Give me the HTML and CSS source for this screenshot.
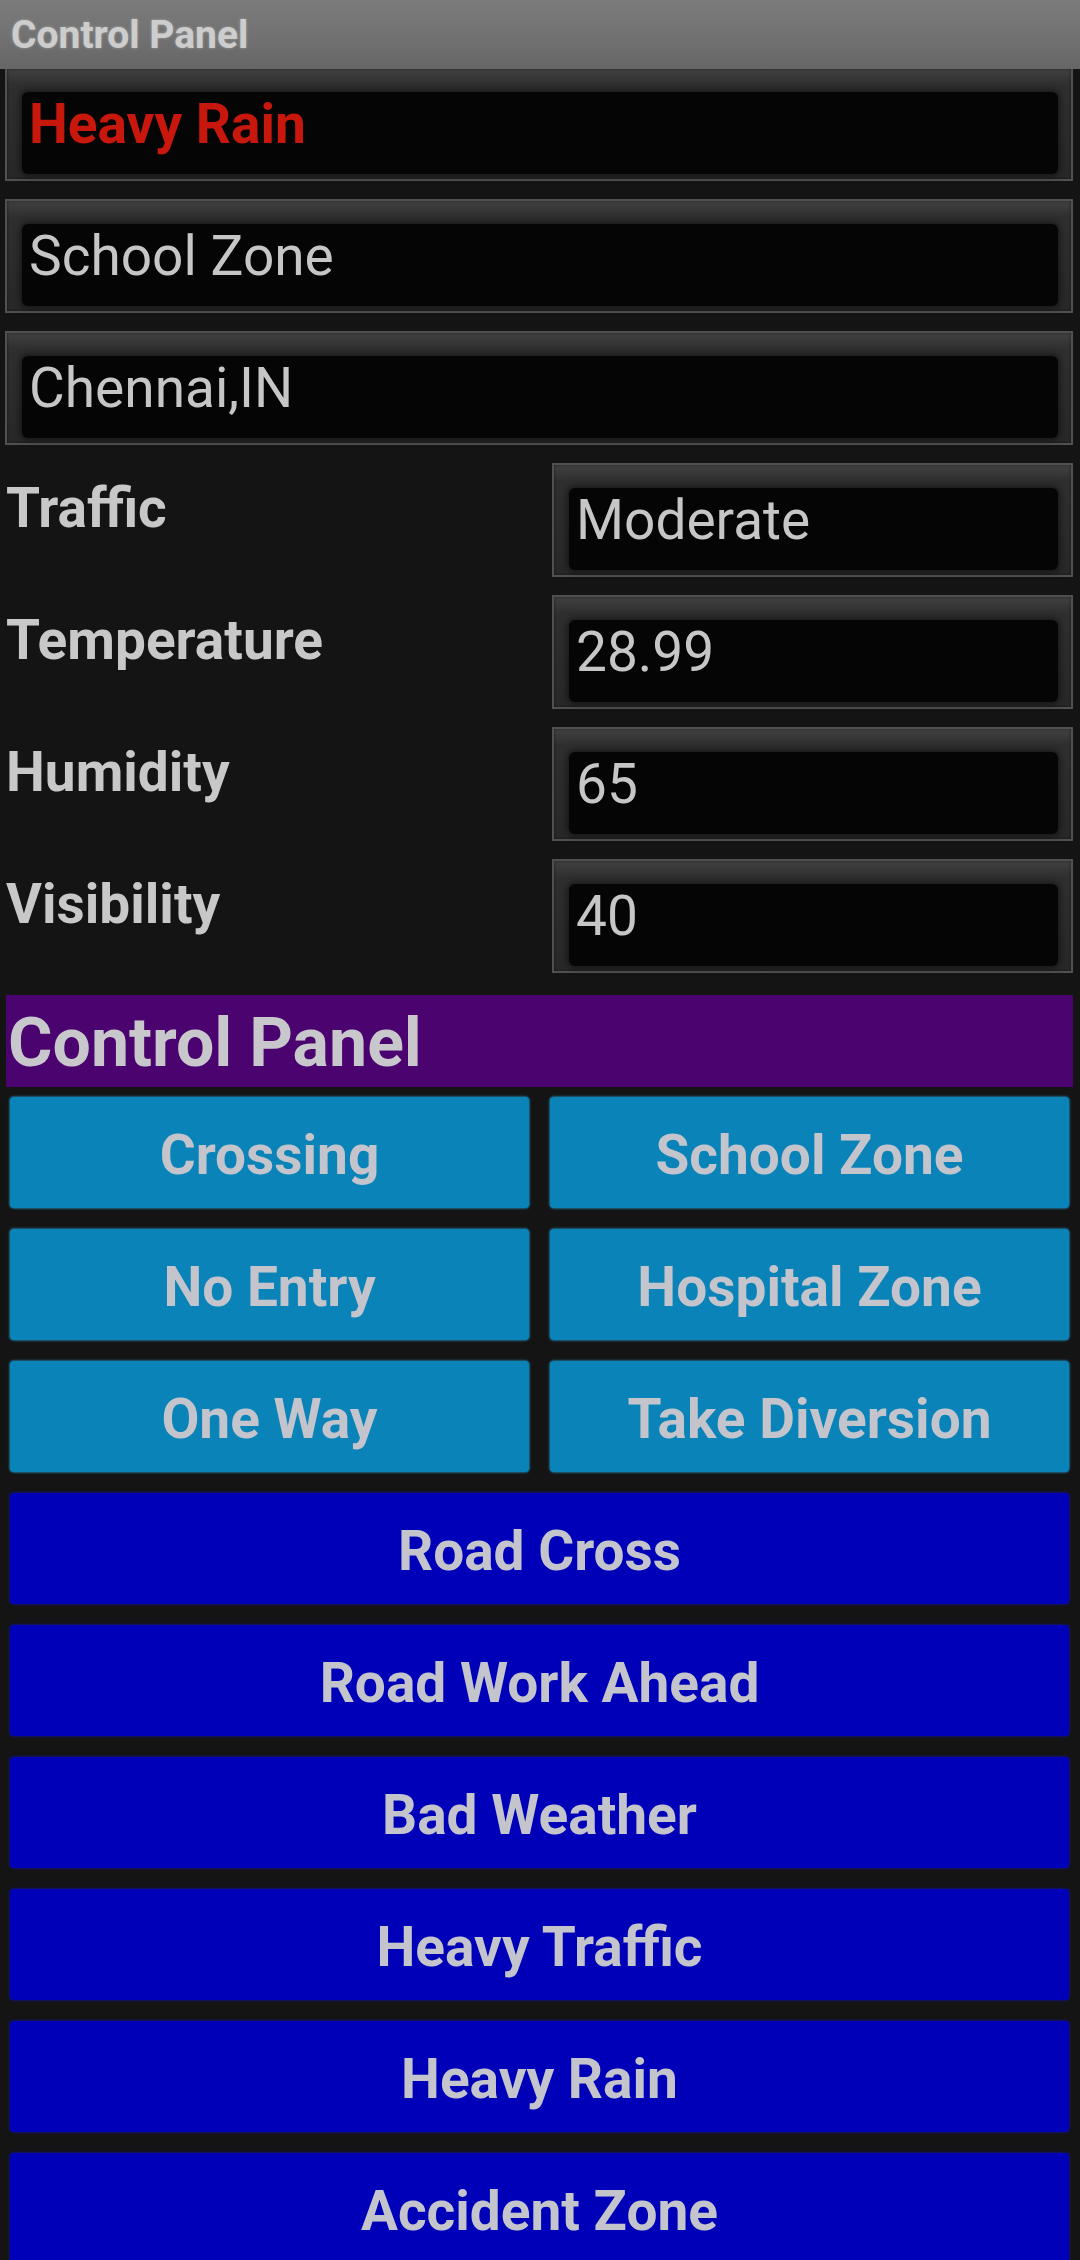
FILE: index.html
```html
<!DOCTYPE html>
<html lang="en">
<head>
<meta charset="utf-8">
<title>Control Panel</title>
<link rel="stylesheet" href="styles.css">
</head>
<body>
<div class="titlebar">Control Panel</div>
<main class="content">
  <div class="field first"><div class="field-inner alert">Heavy Rain</div></div>
  <div class="field"><div class="field-inner">School Zone</div></div>
  <div class="field"><div class="field-inner">Chennai,IN</div></div>

  <div class="info-row">
    <div class="label">Traffic</div>
    <div class="field"><div class="field-inner">Moderate</div></div>
  </div>
  <div class="info-row">
    <div class="label">Temperature</div>
    <div class="field"><div class="field-inner">28.99</div></div>
  </div>
  <div class="info-row">
    <div class="label">Humidity</div>
    <div class="field"><div class="field-inner">65</div></div>
  </div>
  <div class="info-row">
    <div class="label">Visibility</div>
    <div class="field"><div class="field-inner">40</div></div>
  </div>

  <h1 class="panel-header">Control Panel</h1>

  <div class="btn-grid">
    <button class="btn btn-cyan">Crossing</button>
    <button class="btn btn-cyan">School Zone</button>
    <button class="btn btn-cyan">No Entry</button>
    <button class="btn btn-cyan">Hospital Zone</button>
    <button class="btn btn-cyan">One Way</button>
    <button class="btn btn-cyan">Take Diversion</button>
  </div>

  <div class="btn-list">
    <button class="btn btn-blue">Road Cross</button>
    <button class="btn btn-blue">Road Work Ahead</button>
    <button class="btn btn-blue">Bad Weather</button>
    <button class="btn btn-blue">Heavy Traffic</button>
    <button class="btn btn-blue">Heavy Rain</button>
    <button class="btn btn-blue">Accident Zone</button>
  </div>
</main>
</body>
</html>
```

FILE: styles.css
```css
* { box-sizing: border-box; }

html, body {
  margin: 0;
  padding: 0;
  background: #141414;
  font-family: Roboto, "Noto Sans", "Liberation Sans", sans-serif;
  color: #c8c8c8;
}

body { overflow: hidden; }

.titlebar {
  position: relative;
  z-index: 2;
  height: 69px;
  padding: 12px 0 0 11px;
  background: linear-gradient(to bottom, #7b7b7b 0%, #727272 50%, #666666 100%);
  font-weight: 700;
  font-size: 39px;
  line-height: 46px;
  color: #cdcdcd;
  text-shadow: 0 0 3px rgba(255, 255, 255, 0.35);
}

.content {
  padding: 0 7px 0 5px;
}

.field {
  height: 114px;
  margin-bottom: 18px;
  border: 2px solid #505050;
  padding: 23px 13px 5px 15px;
  background: linear-gradient(to bottom, #414141 0px, #2f2f2f 16px, #282828 100%);
  box-shadow: inset 0 0 3px rgba(0, 0, 0, 0.5);
}

.field.first {
  margin-top: -2px;
}

.field-inner {
  height: 100%;
  background: #050505;
  border-radius: 6px;
  box-shadow: 0 0 6px 2px rgba(0, 0, 0, 0.5);
  padding: 0 0 0 7px;
  font-size: 55px;
  line-height: 64px;
  font-weight: 400;
  color: #c6c6c6;
  white-space: nowrap;
}

.field-inner.alert {
  color: #c8170d;
  font-weight: 700;
}

.info-row {
  display: grid;
  grid-template-columns: 1fr 521px;
}

.label {
  padding: 13px 0 0 1px;
  font-size: 55px;
  line-height: 64px;
  font-weight: 700;
  color: #c8c8c8;
}

.panel-header {
  margin: 4px 0 10px 1px;
  height: 92px;
  padding: 8px 0 0 2px;
  background: #4a036f;
  font-size: 68px;
  line-height: 80px;
  font-weight: 700;
  color: #c8c8cc;
}

.btn {
  display: flex;
  align-items: center;
  justify-content: center;
  height: 111px;
  border: none;
  border-radius: 4px;
  margin: 0;
  padding: 4px 0 0 0;
  font-family: Roboto, "Noto Sans", "Liberation Sans", sans-serif;
  font-size: 55px;
  font-weight: 700;
  color: #c4c4cc;
  white-space: nowrap;
}

.btn-cyan {
  background: #0a84b8;
  box-shadow: 0 0 2px 1px rgba(40, 170, 220, 0.55);
}

.btn-blue {
  background: #0000b9;
  box-shadow: 0 0 2px 1px rgba(20, 20, 200, 0.5);
}

.btn-grid {
  display: grid;
  grid-template-columns: 1fr 1fr;
  column-gap: 21px;
  row-gap: 21px;
  padding: 0 4px 0 5px;
  margin-bottom: 21px;
}

.btn-list {
  display: flex;
  flex-direction: column;
  gap: 21px;
  padding: 0 4px 0 5px;
}
```
